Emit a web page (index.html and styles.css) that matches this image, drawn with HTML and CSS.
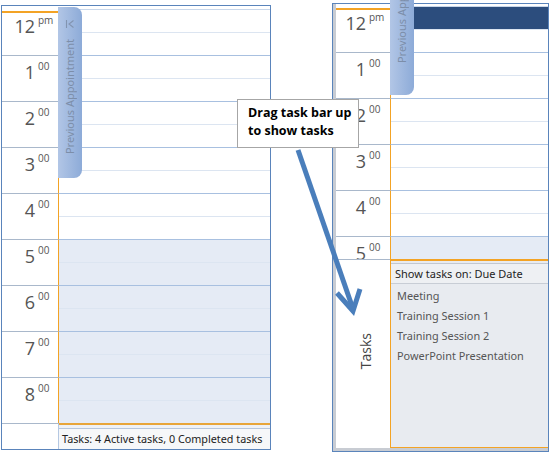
FILE: index.html
```html
<!DOCTYPE html>
<html lang="en">
<head>
    <meta charset="UTF-8">
    <title>Calendar Task Bar</title>
    <link rel="stylesheet" href="styles.css">
</head>
<body>
    <div class="page">
        <!-- left: task bar collapsed -->
        <div class="cal cal-left">
            <div class="hour first"><div class="time"><span class="num">12</span><span class="sup">pm</span></div><div class="slot"><i></i><i></i></div></div>
            <div class="hour"><div class="time"><span class="num">1</span><span class="sup">00</span></div><div class="slot"><i></i><i></i></div></div>
            <div class="hour"><div class="time"><span class="num">2</span><span class="sup">00</span></div><div class="slot"><i></i><i></i></div></div>
            <div class="hour"><div class="time"><span class="num">3</span><span class="sup">00</span></div><div class="slot"><i></i><i></i></div></div>
            <div class="hour"><div class="time"><span class="num">4</span><span class="sup">00</span></div><div class="slot"><i></i><i></i></div></div>
            <div class="hour off"><div class="time"><span class="num">5</span><span class="sup">00</span></div><div class="slot"><i></i><i></i></div></div>
            <div class="hour off"><div class="time"><span class="num">6</span><span class="sup">00</span></div><div class="slot"><i></i><i></i></div></div>
            <div class="hour off"><div class="time"><span class="num">7</span><span class="sup">00</span></div><div class="slot"><i></i><i></i></div></div>
            <div class="hour off"><div class="time"><span class="num">8</span><span class="sup">00</span></div><div class="slot"><i></i><i></i></div></div>
            <div class="taskbar">
                <div class="tb-time"></div>
                <div class="tb-body">
                    <div class="tb-text">Tasks: 4 Active tasks, 0 Completed tasks</div>
                </div>
            </div>
            <div class="tab tab-left">
                <svg class="tab-icon" width="10" height="10" viewBox="0 0 10 10">
                    <path d="M1.5 1v8M8.5 1.5L4 5l4.5 3.5" fill="none" stroke="#8294b0" stroke-width="1.1"/>
                </svg>
                <span class="tab-text">Previous Appointment</span>
            </div>
        </div>

        <!-- right: task bar dragged up -->
        <div class="cal cal-right">
            <div class="inner">
                <div class="hour first"><div class="time"><span class="num">12</span><span class="sup">pm</span></div><div class="slot"><i><b class="appt"></b></i><i></i></div></div>
                <div class="hour"><div class="time"><span class="num">1</span><span class="sup">00</span></div><div class="slot"><i></i><i></i></div></div>
                <div class="hour"><div class="time"><span class="num">2</span><span class="sup">00</span></div><div class="slot"><i></i><i></i></div></div>
                <div class="hour"><div class="time"><span class="num">3</span><span class="sup">00</span></div><div class="slot"><i></i><i></i></div></div>
                <div class="hour"><div class="time"><span class="num">4</span><span class="sup">00</span></div><div class="slot"><i></i><i></i></div></div>
                <div class="hour half off"><div class="time"><span class="num">5</span><span class="sup">00</span></div><div class="slot"><i></i></div></div>
                <div class="tasks">
                    <div class="tasks-label"><span>Tasks</span></div>
                    <div class="tasks-body">
                        <div class="tasks-head">Show tasks on: Due Date</div>
                        <ul class="task-list">
                            <li>Meeting</li>
                            <li>Training Session 1</li>
                            <li>Training Session 2</li>
                            <li>PowerPoint Presentation</li>
                        </ul>
                    </div>
                </div>
            </div>
            <div class="tab tab-right">
                <span class="tab-text">Previous Appointment</span>
            </div>
        </div>
    </div>

    <div class="callout">Drag task bar up<br>to show tasks</div>

    <svg class="arrow" width="549" height="453" viewBox="0 0 549 453">
        <path d="M298 150L352 306" stroke="#4a7ebb" stroke-width="5" fill="none"/>
        <path d="M337 293L353 311L360 289" stroke="#4a7ebb" stroke-width="5" fill="none" stroke-linejoin="miter"/>
    </svg>
</body>
</html>
```

FILE: styles.css
```css
body {
    margin: 0;
    background: #fff;
    font-family: "Open Sans", "Noto Sans", sans-serif;
    color: #333;
}
.page {
    display: flex;
    align-items: flex-start;
    padding-left: 1px;
}
.cal {
    position: relative;
    border: 1px solid #5a84bb;
    background: #fff;
}
.cal-left {
    width: 268px;
    margin-top: 5px;
    padding-top: 3px;
}
.cal-right {
    width: 215px;
    height: 447px;
    margin-top: 3px;
    margin-left: 61px;
    background: #c8ccd3;
}
.cal-right .inner {
    margin-left: 3px;
    height: 442px;
    padding-top: 2px;
    background: #fff;
    display: flex;
    flex-direction: column;
}

/* hour rows */
.hour {
    display: flex;
    height: 46px;
}
.time {
    width: 56px;
    border-top: 1px solid #a9b8cb;
    display: flex;
    align-items: flex-start;
    color: #555;
}
.cal-right .time {
    width: 54px;
}
.first .time {
    border-top-color: #fff;
    background: linear-gradient(#fff 1px, #f3a325 1px, #f3a325 3px, #fff 3px);
}
.num {
    width: 33px;
    text-align: right;
    font-size: 18px;
    line-height: 20px;
    margin-top: 6px;
}
.cal-right .num {
    width: 30px;
}
.sup {
    font-size: 10px;
    line-height: 10px;
    margin-top: 5px;
    margin-left: 3px;
}
.slot {
    flex: 1;
    border-left: 1px solid #f3a325;
    border-top: 1px solid #a8c0e0;
    display: flex;
    flex-direction: column;
}
.first .slot {
    border-top-color: #c9d7ea;
}
.slot i {
    display: flex;
    height: 22px;
}
.slot i:first-child {
    border-bottom: 1px solid #dce5f1;
}
.half {
    height: 23px;
}
.half .slot i:first-child {
    border-bottom: 0;
}
.off .slot {
    background: #e5ebf5;
}
.appt {
    flex: 1;
    margin-left: 23px;
    background: #2c4d7d;
}

/* collapsed task bar */
.taskbar {
    display: flex;
    height: 26px;
}
.tb-time {
    width: 56px;
    border-top: 1px solid #a9b8cb;
    border-right: 1px solid #b5c8e2;
}
.tb-body {
    flex: 1;
    border-top: 2px solid #e8a53a;
    padding-top: 3px;
    background: #eef1f6;
}
.tb-text {
    border-top: 1px solid #b6c6dc;
    height: 20px;
    background: #f6f7f9;
    font-family: "Noto Sans", sans-serif;
    font-size: 10.8px;
    line-height: 19px;
    padding-left: 3px;
    white-space: nowrap;
    color: #222;
}

/* previous appointment tab */
.tab {
    position: absolute;
    width: 24px;
    border-radius: 0 8px 8px 0;
    background: linear-gradient(to right, #b2c6e6, #8dabd8);
    display: flex;
    flex-direction: column;
    align-items: center;
}
.tab-left {
    left: 56px;
    top: 1px;
    height: 171px;
}
.tab-right {
    left: 57px;
    top: -60px;
    height: 151px;
    justify-content: flex-end;
}
.tab-icon {
    margin-top: 12px;
    margin-left: -1px;
}
.tab-text {
    writing-mode: vertical-rl;
    transform: rotate(180deg);
    font-family: "Noto Sans", sans-serif;
    font-size: 11px;
    color: #7c8ea9;
    white-space: nowrap;
    margin-left: -1px;
}
.tab-left .tab-text {
    margin-top: 10px;
}
.tab-right .tab-text {
    margin-bottom: 32px;
}

/* expanded task list */
.tasks {
    flex: 1;
    display: flex;
}
.tasks-label {
    width: 54px;
    border-top: 1px solid #a9b8cb;
    display: flex;
    justify-content: center;
    align-items: flex-start;
}
.tasks-label span {
    writing-mode: vertical-rl;
    transform: rotate(180deg);
    font-size: 14px;
    color: #444;
    margin-top: 73px;
    margin-left: 4px;
}
.tasks-body {
    flex: 1;
    border-left: 1px solid #f3a325;
    border-top: 2px solid #f3a325;
    border-bottom: 1px solid #f3a325;
    padding-top: 2px;
    background: #e8ebf0;
}
.tasks-head {
    height: 19px;
    border-top: 1px solid #c2c8d1;
    border-bottom: 1px solid #c8cdd5;
    background: #eef0f3;
    font-family: "Noto Sans", sans-serif;
    font-size: 11px;
    line-height: 19px;
    padding-left: 4px;
    color: #1e1e1e;
}
.task-list {
    list-style: none;
    margin: 0;
    padding: 2px 0 0 6px;
    font-family: "Noto Sans", sans-serif;
    font-size: 10.9px;
    color: #555;
}
.task-list li {
    height: 20px;
    line-height: 20px;
}

/* annotation */
.callout {
    position: absolute;
    left: 237px;
    top: 99px;
    width: 110px;
    height: 40px;
    padding: 4px 0 3px 10px;
    background: #fff;
    border: 1px solid #a6a6a6;
    font-family: "Open Sans", sans-serif;
    font-weight: 700;
    font-size: 12.5px;
    line-height: 18px;
    color: #000;
}
.arrow {
    position: absolute;
    left: 0;
    top: 0;
    pointer-events: none;
}
```
